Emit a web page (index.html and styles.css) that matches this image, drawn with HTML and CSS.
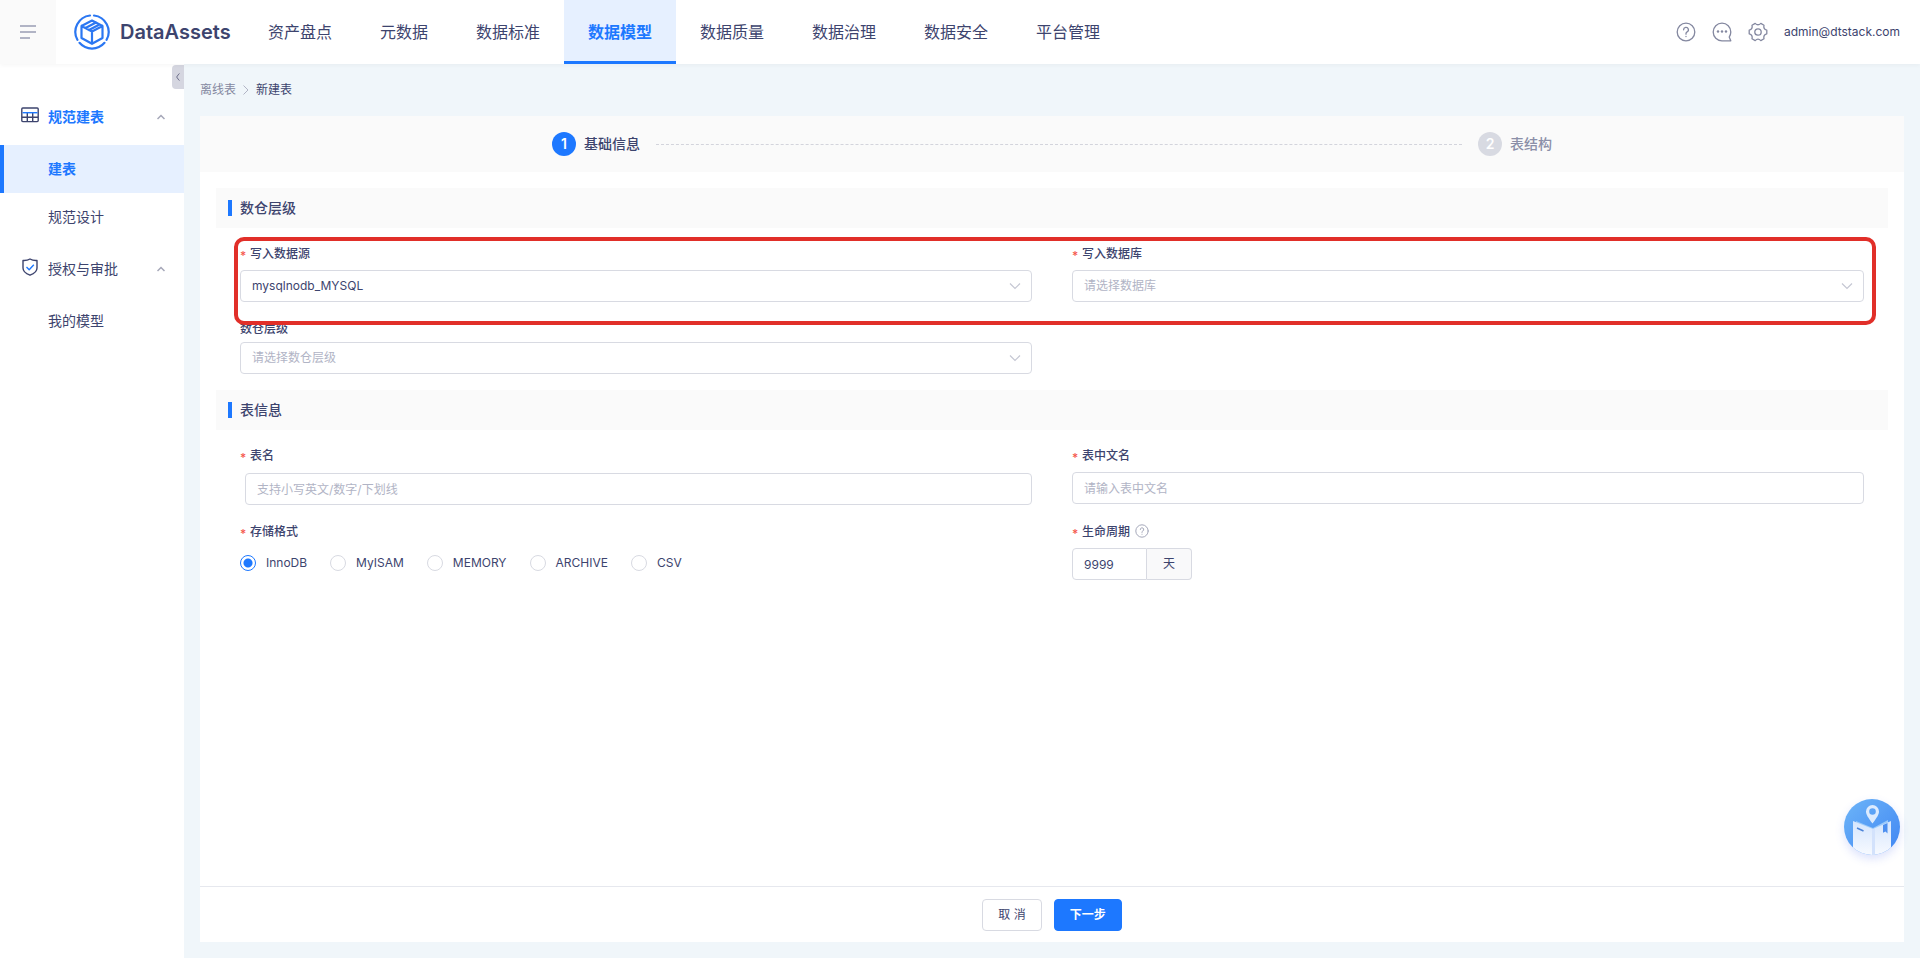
FILE: index.html
```html
<!DOCTYPE html>
<html lang="zh-CN">
<head>
    <meta charset="UTF-8">
    <title>DataAssets</title>
    <link rel="stylesheet" href="styles.css">
</head>
<body>
    <header class="header">
        <button class="menu-toggle" aria-label="菜单">
            <svg width="16" height="14" viewBox="0 0 16 14" stroke="#b1b4c5" stroke-width="2"><path d="M0 1h16M0 7h16M0 13h10"/></svg>
        </button>
        <a class="logo" href="#">
            <svg width="36" height="36" viewBox="0 0 36 36" fill="none" stroke="#2b77f2" stroke-width="2.2" stroke-linecap="round" stroke-linejoin="round">
                <path d="M20 1.5A16.5 16.5 0 0 1 32.6 25.800M30.500 28.800A16.500 16.500 0 0 1 5.500 28.800M3.400 25.800A16.500 16.500 0 0 1 16 1.500"/>
                <path d="M18 6.500L28.500 12V24L18 29.800L7.500 24V12ZM7.500 12L18 17.500L28.500 12M18 17.500V29.500M11.500 14L22 8.500M15 16L25.500 10.500"/>
            </svg>
            <span>DataAssets</span>
        </a>
        <nav class="nav">
            <a href="#">资产盘点</a>
            <a href="#">元数据</a>
            <a href="#">数据标准</a>
            <a href="#" class="active">数据模型</a>
            <a href="#">数据质量</a>
            <a href="#">数据治理</a>
            <a href="#">数据安全</a>
            <a href="#">平台管理</a>
        </nav>
        <div class="tools">
            <button class="icon-btn" aria-label="帮助">
                <svg width="20" height="20" viewBox="0 0 20 20" fill="none" stroke="#8488a0" stroke-width="1.3" stroke-linecap="round"><circle cx="10" cy="10" r="8.800"/><path d="M7.600 7.800a2.400 2.400 0 1 1 3.500 2.100c-.8.400-1.100.9-1.100 1.700v.6M10 14.300v.2"/></svg>
            </button>
            <button class="icon-btn" aria-label="消息">
                <svg width="20" height="20" viewBox="0 0 20 20" fill="none" stroke="#8488a0" stroke-width="1.3" stroke-linejoin="round"><path d="M18.800 10A8.800 8.800 0 1 0 10 18.800H18.800L17.200 15.100A8.800 8.800 0 0 0 18.800 10Z"/><g fill="#8488a0" stroke="none"><circle cx="6" cy="9.500" r="1.200"/><circle cx="10" cy="9.500" r="1.200"/><circle cx="14" cy="9.500" r="1.200"/></g></svg>
            </button>
            <button class="icon-btn" aria-label="设置">
                <svg width="20" height="20" viewBox="0 0 20 20" fill="none" stroke="#8488a0" stroke-width="1.3" stroke-linejoin="round"><path d="M7.200 1.400Q10 4.200 12.800 1.400L16 3.200Q15 7.200 18.800 8.200V11.800Q15 12.800 16 16.800L12.800 18.600Q10 15.800 7.200 18.600L4 16.800Q5 12.800 1.200 11.800V8.200Q5 7.200 4 3.200Z"/><circle cx="10" cy="10" r="3.200"/></svg>
            </button>
            <span class="user">admin@dtstack.com</span>
        </div>
    </header>

    <div class="layout">
        <aside class="sidebar">
            <button class="collapse" aria-label="收起">
                <svg width="4" height="8" viewBox="0 0 4 8" fill="none" stroke="#6c6f8a"><path d="M3.500 .5Q1.500 2 1.500 3L.5 4L1.500 5Q1.500 6 3.500 7.500"/></svg>
            </button>
            <a class="group current" href="#">
                <svg class="group-icon" width="18" height="16" viewBox="0 0 18 16" fill="none" stroke="#3d446e" stroke-width="1.4"><rect x=".8" y="1" width="16.400" height="13.600" rx="1"/><path d="M1 10.200h16M6.300 6v8.500M11.700 6v8.500"/><path d="M1.500 5.700h15" stroke="#1d78ff"/></svg>
                <span>规范建表</span>
                <svg class="caret" width="8" height="6" viewBox="0 0 8 6" fill="none" stroke="#a5a7b8" stroke-width="1.5"><path d="M.5 5L4 1.500L7.500 5"/></svg>
            </a>
            <a class="item active" href="#">建表</a>
            <a class="item" href="#">规范设计</a>
            <a class="group" href="#">
                <svg class="group-icon" width="18" height="18" viewBox="0 0 18 18" fill="none" stroke="#3d446e" stroke-width="1.4" stroke-linejoin="round"><path d="M9 1Q12 2.800 16 2.500V10Q16 14.500 9 17.200Q2 14.500 2 10V2.500Q6 2.800 9 1Z"/><path d="M5.500 9L8.200 11.700L12.800 6.800" stroke="#1d78ff"/></svg>
                <span>授权与审批</span>
                <svg class="caret" width="8" height="6" viewBox="0 0 8 6" fill="none" stroke="#a5a7b8" stroke-width="1.5"><path d="M.5 5L4 1.500L7.500 5"/></svg>
            </a>
            <a class="item" href="#">我的模型</a>
        </aside>

        <main class="main">
            <div class="breadcrumb">
                <a href="#">离线表</a>
                <svg width="6" height="10" viewBox="0 0 6 10" fill="none" stroke="#b1b4c5"><path d="M.5 .5L5 5L.5 9.500"/></svg>
                <span>新建表</span>
            </div>

            <form class="panel">
                <div class="steps-bar">
                    <div class="steps">
                        <div class="step active"><span class="num">1</span>基础信息</div>
                        <div class="step-line"></div>
                        <div class="step"><span class="num">2</span>表结构</div>
                    </div>
                </div>

                <div class="content">
                    <section class="section">
                        <h3>数仓层级</h3>
                        <div class="fields">
                            <div class="highlight"></div>
                            <div class="field">
                                <label class="required" for="source">写入数据源</label>
                                <div class="select">
                                    <select id="source"><option>mysqlnodb_MYSQL</option></select>
                                    <svg width="12" height="8" viewBox="0 0 12 8" fill="none" stroke="#c5c7d3" stroke-width="1.2"><path d="M1 1.500L6 6.500L11 1.500"/></svg>
                                </div>
                            </div>
                            <div class="field">
                                <label class="required" for="database">写入数据库</label>
                                <div class="select">
                                    <select id="database" class="empty"><option>请选择数据库</option></select>
                                    <svg width="12" height="8" viewBox="0 0 12 8" fill="none" stroke="#c5c7d3" stroke-width="1.2"><path d="M1 1.500L6 6.500L11 1.500"/></svg>
                                </div>
                            </div>
                            <div class="field compact">
                                <label for="level">数仓层级</label>
                                <div class="select">
                                    <select id="level" class="empty"><option>请选择数仓层级</option></select>
                                    <svg width="12" height="8" viewBox="0 0 12 8" fill="none" stroke="#c5c7d3" stroke-width="1.2"><path d="M1 1.500L6 6.500L11 1.500"/></svg>
                                </div>
                            </div>
                        </div>
                    </section>

                    <section class="section">
                        <h3>表信息</h3>
                        <div class="fields">
                            <div class="field">
                                <label class="required" for="tableName">表名</label>
                                <div class="name-box">
                                    <input type="text" id="tableName" placeholder="支持小写英文/数字/下划线">
                                </div>
                            </div>
                            <div class="field">
                                <label class="required" for="tableCn">表中文名</label>
                                <input type="text" id="tableCn" placeholder="请输入表中文名">
                            </div>
                            <div class="field" role="radiogroup" aria-labelledby="formatLabel">
                                <div class="label required" id="formatLabel">存储格式</div>
                                <div class="radios">
                                    <label><input type="radio" name="format" checked>InnoDB</label>
                                    <label><input type="radio" name="format">MyISAM</label>
                                    <label><input type="radio" name="format">MEMORY</label>
                                    <label><input type="radio" name="format">ARCHIVE</label>
                                    <label><input type="radio" name="format">CSV</label>
                                </div>
                            </div>
                            <div class="field">
                                <label class="required" for="life">生命周期
                                    <svg class="tip" width="14" height="14" viewBox="0 0 14 14" fill="none" stroke="#a5a8ba" stroke-linecap="round"><circle cx="7" cy="7" r="6.200"/><path d="M5.300 5.500a1.700 1.700 0 1 1 2.500 1.500c-.6.300-.8.600-.8 1.200v.3M7 10.200v.1"/></svg>
                                </label>
                                <div class="input-group">
                                    <input type="text" id="life" value="9999">
                                    <span>天</span>
                                </div>
                            </div>
                        </div>
                    </section>
                </div>

                <div class="footer">
                    <button type="button" class="btn">取 消</button>
                    <button type="button" class="btn primary">下一步</button>
                </div>
            </form>
        </main>
    </div>

    <button class="guide" aria-label="指引">
        <svg width="56" height="56" viewBox="0 0 56 56">
            <defs>
                <linearGradient id="sky" x1="0" y1="0" x2="1" y2="1"><stop offset="0" stop-color="#6db5f8"/><stop offset="1" stop-color="#3f85f3"/></linearGradient>
                <linearGradient id="page" x1="0" y1="0" x2="0" y2="1"><stop offset="0" stop-color="#d5e5fd"/><stop offset="1" stop-color="#f7faff"/></linearGradient>
                <clipPath id="round"><circle cx="28" cy="28" r="28"/></clipPath>
            </defs>
            <g clip-path="url(#round)">
                <rect width="56" height="56" fill="url(#sky)"/>
                <path d="M12 22L29 29L44 21V30H12Z" fill="#9bcafa"/>
                <path d="M9 22L29 30V56H9Z" fill="url(#page)"/>
                <path d="M47 22L29 30V56H47Z" fill="url(#page)"/>
                <path d="M28 30h3v26h-3z" fill="#d3e2fc"/>
                <path d="M13 29L19.500 32" stroke="#4b83d8" stroke-width="1.600"/>
                <path d="M39 26L43.500 24V34.500L41.500 32.500L39 33.800Z" fill="#4d8ff0"/>
                <path d="M28.500 24.500C24 18.500 22 15.500 22 12.500a6.500 6.500 0 0 1 13 0C35 15.500 33 18.500 28.500 24.500ZM28.500 9.200a3.300 3.300 0 1 0 0 6.600a3.300 3.300 0 0 0 0-6.600Z" fill="#dcebfe" fill-rule="evenodd"/>
            </g>
        </svg>
    </button>
</body>
</html>
```
FILE: styles.css
```css
* {
    box-sizing: border-box;
}
body {
    margin: 0;
    min-height: 100vh;
    display: flex;
    flex-direction: column;
    font-family: Inter, "Noto Sans CJK SC", sans-serif;
    font-size: 12px;
    line-height: 18px;
    color: #3d446e;
    background-color: #f0f6fa;
}
a {
    color: inherit;
    text-decoration: none;
}
button, input, select {
    font: inherit;
    color: inherit;
}
button {
    padding: 0;
    border: none;
    background: none;
    cursor: pointer;
}
svg {
    display: block;
}

/* header */
.header {
    display: flex;
    height: 64px;
    background: #fff;
    box-shadow: 0 2px 4px rgba(0, 0, 0, 0.03);
    position: relative;
    z-index: 2;
}
.menu-toggle {
    display: flex;
    align-items: center;
    justify-content: center;
    width: 56px;
    background: #fafafa;
}
.logo {
    display: flex;
    align-items: center;
    gap: 10px;
    width: 188px;
    padding-left: 18px;
    font-size: 20px;
    font-weight: 600;
}
.nav {
    display: flex;
    flex: 1;
}
.nav a {
    padding: 0 24px;
    font-size: 16px;
    line-height: 64px;
}
.nav a.active {
    color: #1d78ff;
    font-weight: 600;
    background: #e6f0ff;
    box-shadow: inset 0 -3px #1d78ff;
}
.tools {
    display: flex;
    align-items: center;
    gap: 16px;
    padding-right: 20px;
}

/* sidebar */
.layout {
    display: flex;
    flex: 1;
}
.sidebar {
    position: relative;
    width: 184px;
    padding-top: 25px;
    background: #fff;
    font-size: 14px;
}
.collapse {
    position: absolute;
    top: 1px;
    right: 0;
    display: flex;
    align-items: center;
    justify-content: center;
    width: 12px;
    height: 24px;
    background: #d5d6e0;
    border-radius: 4px 0 0 4px;
}
.group {
    display: flex;
    align-items: center;
    height: 56px;
    padding: 0 19px 0 21px;
}
.group-icon {
    margin: 0 9px 4px 0;
}
.group.current {
    color: #1d78ff;
    font-weight: 600;
}
.caret {
    margin-left: auto;
}
.item {
    display: block;
    padding-left: 48px;
    line-height: 48px;
}
.item.active {
    color: #1d78ff;
    font-weight: 600;
    background: #e6f0ff;
    box-shadow: inset 4px 0 #1d78ff;
}

/* main */
.main {
    display: flex;
    flex: 1;
    flex-direction: column;
    padding: 0 16px 16px;
}
.breadcrumb {
    display: flex;
    align-items: center;
    gap: 7px;
    height: 52px;
}
.breadcrumb a {
    color: #8488a0;
}
.panel {
    display: flex;
    flex: 1;
    flex-direction: column;
    background: #fff;
}
.steps-bar {
    padding: 16px;
    background: #fafafa;
}
.steps {
    display: flex;
    align-items: center;
    gap: 16px;
    max-width: 1000px;
    margin: 0 auto;
}
.step {
    display: flex;
    align-items: center;
    gap: 8px;
    font-size: 14px;
    font-weight: 500;
    line-height: 24px;
    color: #8b8fa8;
}
.step.active {
    color: #3d446e;
}
.num {
    width: 24px;
    border-radius: 50%;
    text-align: center;
    font-weight: 600;
    color: #fff;
    background: #d8dae2;
}
.step.active .num {
    background: #1d78ff;
}
.step-line {
    flex: 1;
    border-top: 1px dashed #d3d4dc;
}
.content {
    flex: 1;
    padding: 0 16px;
}
.section {
    padding-top: 16px;
}
.section h3 {
    display: flex;
    align-items: center;
    gap: 8px;
    height: 40px;
    margin: 0;
    padding-left: 12px;
    font-size: 14px;
    font-weight: 500;
    background: #fafafa;
}
.section h3::before {
    content: "";
    width: 4px;
    height: 16px;
    background: #1d78ff;
}
.fields {
    position: relative;
    display: grid;
    grid-template-columns: 1fr 1fr;
    gap: 19px 40px;
    padding: 17px 24px 0;
}
/* red frame round the first row */
.highlight {
    position: absolute;
    top: 9px;
    left: 18px;
    right: 12px;
    height: 88px;
    border: 4px solid #e12f29;
    border-radius: 10px;
    pointer-events: none;
}
.field > label, .label {
    display: flex;
    align-items: center;
    height: 18px;
    margin-bottom: 7px;
    font-weight: 500;
}
.compact > label {
    height: 16px;
    margin-bottom: 5px;
}
.required::before {
    content: "*";
    width: 10px;
    padding-top: 4px;
    color: #f5594e;
}
.tip {
    margin: 0 0 2px 5px;
}
input[type=text], select {
    display: block;
    width: 100%;
    height: 32px;
    padding: 0 11px;
    border: 1px solid #d8dae2;
    border-radius: 4px;
    background: #fff;
    outline: none;
}
select {
    appearance: none;
}
select.empty, ::placeholder {
    color: #b1b4c5;
}
.select {
    position: relative;
}
.select svg {
    position: absolute;
    top: 12px;
    right: 11px;
    pointer-events: none;
}
.name-box {
    padding: 1px 0 0 5px;
}
.name-box input[type=text] {
    margin-bottom: -1px;
}
.radios {
    display: flex;
    align-items: center;
    gap: 23px;
    height: 30px;
}
.radios label {
    display: flex;
    align-items: center;
    gap: 10px;
}
.radios input {
    appearance: none;
    width: 16px;
    height: 16px;
    margin: 0;
    border: 1px solid #d8dae2;
    border-radius: 50%;
}
.radios input:checked {
    border-color: #1d78ff;
    background: radial-gradient(#1d78ff 4px, #fff 5px);
}
.input-group {
    display: flex;
    width: 120px;
}
.input-group input[type=text] {
    border-radius: 4px 0 0 4px;
}
.input-group span {
    flex: none;
    width: 45px;
    border: 1px solid #d8dae2;
    border-left: none;
    border-radius: 0 4px 4px 0;
    line-height: 30px;
    text-align: center;
    background: #f9f9fa;
}
.footer {
    display: flex;
    justify-content: center;
    gap: 12px;
    padding: 12px 0 11px;
    border-top: 1px solid #e6e8ee;
}
.btn {
    height: 32px;
    padding: 0 15px;
    border: 1px solid #d8dae2;
    border-radius: 4px;
    background: #fff;
}
.btn.primary {
    border-color: #1d78ff;
    color: #fff;
    font-weight: 600;
    background: #1d78ff;
}

/* floating guide button */
.guide {
    position: fixed;
    right: 20px;
    bottom: 103px;
    border-radius: 50%;
    box-shadow: 0 4px 10px rgba(80, 110, 240, 0.2);
}
```
